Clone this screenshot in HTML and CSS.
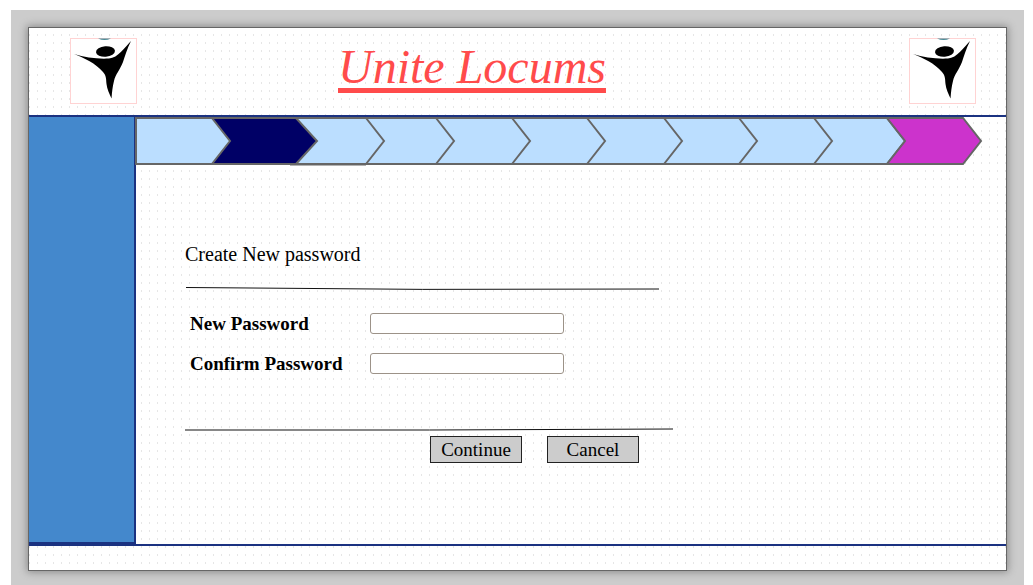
FILE: index.html
```html
<!DOCTYPE html>
<html lang="en">
<head>
<meta charset="utf-8">
<meta name="viewport" content="width=device-width, initial-scale=1">
<title>Unite Locums</title>
<link rel="stylesheet" href="styles.css">
</head>
<body>
<svg class="symbols" aria-hidden="true">
  <symbol id="figure" viewBox="0 0 67 66">
    <rect x="0.5" y="0.5" width="66" height="65" fill="#fff" stroke="#ffd3d3"/>
    <path d="M28 0.500H41Q34.500 3.500 28 0.500Z" fill="#4a8a96"/>
    <ellipse cx="35.500" cy="13.500" rx="9.500" ry="5.200" transform="rotate(-4 35.500 13.500)"/>
    <path d="M4 16C15 19.500 28 21.200 39 20.500C48 20 55 9 61 3C57 11 55 18 53 24C50 32 45.500 36 44 43C42.500 49 42 54 41.500 60.500C39.500 56 37 51 36.500 46C36 41 36.500 38 33 34C26 25.500 14 20 4 16Z"/>
  </symbol>
</svg>
<div class="frame">
  <div class="page">
    <header class="header">
      <svg class="logo" aria-hidden="true"><use href="#figure"/></svg>
      <h1 class="title">Unite Locums</h1>
      <svg class="logo" aria-hidden="true"><use href="#figure"/></svg>
    </header>
    <div class="body">
      <aside class="sidebar"></aside>
      <main class="main">
        <svg class="steps" viewBox="0 0 848 49" role="img" aria-label="Registration progress">
          <path class="step" d="M1 1H752L770 24L752 47H1Z"/>
          <path class="step current" d="M77 1H161L182 24L161 47H77L95 24Z"/>
          <path class="edge" d="M155 47.500H231"/>
          <path class="edge" d="M231 1L249 24L231 47M301 1L319 24L301 47M377 1L395 24L377 47M452 1L470 24L452 47M529 1L547 24L529 47M604 1L622 24L604 47M679 1L697 24L679 47"/>
          <path class="step last" d="M752 1H828L846 24L828 47H752L770 24Z"/>
        </svg>
        <form class="form">
          <h2 class="heading">Create New password</h2>
          <svg class="rule" viewBox="0 0 488 6" aria-hidden="true"><path d="M1 1.500Q238 4.500 474 3"/></svg>
          <div class="fields">
            <label for="new-password">New Password</label>
            <input id="new-password" type="password">
            <label for="confirm-password">Confirm Password</label>
            <input id="confirm-password" type="password">
          </div>
          <svg class="rule" viewBox="0 0 488 6" aria-hidden="true"><path d="M0 3Q245 3.500 488 2"/></svg>
          <div class="actions">
            <button type="button">Continue</button>
            <button type="button">Cancel</button>
          </div>
        </form>
      </main>
    </div>
    <footer class="footer"></footer>
  </div>
</div>
</body>
</html>
```
FILE: styles.css
```css
* {
  box-sizing: border-box;
}

body {
  margin: 0;
  background: #fff;
  color: #000;
  font-family: "Liberation Serif", "Times New Roman", serif;
}

.symbols {
  position: absolute;
  width: 0;
  height: 0;
}

.frame {
  display: flex;
  min-height: calc(100vh - 10px);
  margin: 10px 9px 0 11px;
  padding: 17px 17px 14px;
  background: #ccc;
}

.page {
  display: flex;
  flex: 1;
  flex-direction: column;
  min-width: 0;
  border: 1px solid #666;
  background:
    conic-gradient(at 1px 2px, transparent 270deg, #e6e6e6 0) 0 6px / 8px 8px,
    #fff;
  box-shadow: 0 0 8px 1px #888;
}

.header {
  display: grid;
  grid-template-columns: 67px 1fr 67px;
  align-items: start;
  padding: 10px 30px 11px 41px;
  border-bottom: 2px solid #1b3281;
}

.logo {
  display: block;
  width: 67px;
  height: 66px;
}

.title {
  margin: 0;
  padding-right: 102px;
  color: #ff4b4b;
  font-size: 48px;
  font-style: italic;
  font-weight: 400;
  line-height: 58px;
  text-align: center;
  text-decoration: underline;
  text-decoration-skip-ink: none;
  text-decoration-thickness: 5px;
  text-underline-offset: 5px;
}

.body {
  display: flex;
  flex: 1;
}

.sidebar {
  flex: none;
  width: 107px;
  border-right: 2px solid #1b3281;
  border-bottom: 2px solid #1b3281;
  background: #4488cc;
}

.main {
  flex: 1;
  min-width: 0;
}

.steps {
  display: block;
  width: 848px;
  height: 49px;
  margin-left: -1px;
}

.step,
.edge {
  fill: none;
  stroke: #666;
  stroke-width: 2;
}

.step {
  fill: #bbdeff;
}

.current {
  fill: #000066;
}

.last {
  fill: #cc33cc;
}

.form {
  width: 488px;
  margin: 76px 0 0 49px;
}

.heading {
  margin: 0 0 20px;
  font-size: 20px;
  font-weight: 400;
  line-height: 24px;
}

.rule {
  display: block;
  width: 488px;
  height: 6px;
  fill: none;
  stroke: #111;
}

.fields {
  display: grid;
  grid-template-columns: 180px 194px;
  row-gap: 19px;
  margin: 21px 0 53px 5px;
}

.fields label {
  font-size: 19px;
  font-weight: 700;
  line-height: 21px;
}

.fields input {
  width: 194px;
  height: 21px;
  padding: 0 4px;
  border: 1px solid #9c9288;
  border-radius: 3px;
  background: #fff;
  font: inherit;
}

.actions {
  display: flex;
  justify-content: flex-end;
  gap: 25px;
  margin-top: 3px;
  padding-right: 34px;
}

.actions button {
  width: 92px;
  height: 27px;
  padding: 0;
  border: 1px solid #222;
  border-radius: 0;
  background: #ccc;
  color: #000;
  font-family: inherit;
  font-size: 19px;
  line-height: 25px;
}

.footer {
  height: 26px;
  border-top: 2px solid #1b3281;
}
```
